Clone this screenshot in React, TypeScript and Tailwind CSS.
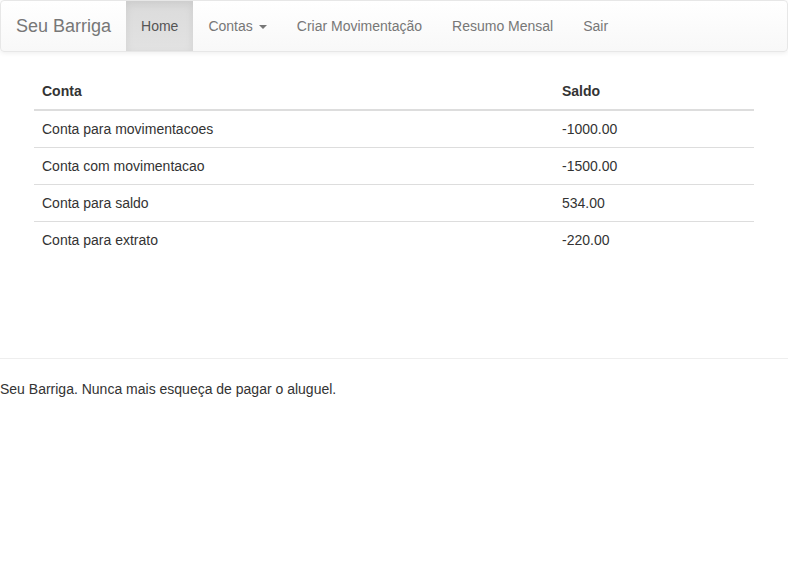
import { } from 'react';

const navItems = ['Criar Movimentação', 'Resumo Mensal', 'Sair'];

const contas = [
  { nome: 'Conta para movimentacoes', saldo: '-1000.00' },
  { nome: 'Conta com movimentacao', saldo: '-1500.00' },
  { nome: 'Conta para saldo', saldo: '534.00' },
  { nome: 'Conta para extrato', saldo: '-220.00' },
];

export default function App() {
  return (
    <div
      className="min-h-[561px] bg-white text-[14px] leading-[20px] text-[#333]"
      style={{ fontFamily: '"Liberation Sans", Arial, sans-serif' }}
    >
      {/* navbar */}
      <nav className="flex h-[52px] items-stretch rounded-[4px] border border-[#e7e7e7] bg-gradient-to-b from-white to-[#f8f8f8] shadow-[0_1px_5px_rgba(0,0,0,0.075)]">
        <a className="flex items-center px-[15px] text-[18px] text-[#777]">Seu Barriga</a>
        <ul className="flex items-stretch">
          <li className="flex items-center bg-gradient-to-b from-[#dbdbdb] to-[#e2e2e2] px-[15px] text-[#555] shadow-[inset_0_3px_9px_rgba(0,0,0,0.075)]">
            Home
          </li>
          <li className="flex items-center px-[15px] text-[#777]">
            Contas
            <span className="ml-[6px] mt-[2px] inline-block h-0 w-0 border-x-[4px] border-t-[4px] border-x-transparent border-t-[#777]" />
          </li>
          {navItems.map((item) => (
            <li key={item} className="flex items-center px-[15px] text-[#777]">
              {item}
            </li>
          ))}
        </ul>
      </nav>

      {/* conteudo */}
      <div className="mx-auto mt-[21px] w-[750px] px-[15px]">
        <table className="w-full border-collapse text-left">
          <thead>
            <tr className="border-b-2 border-[#ddd]">
              <th className="w-[520px] p-[8px] font-bold">Conta</th>
              <th className="p-[8px] font-bold">Saldo</th>
            </tr>
          </thead>
          <tbody>
            {contas.map((c, i) => (
              <tr key={c.nome} className={i > 0 ? 'border-t border-[#ddd]' : ''}>
                <td className="p-[8px]">{c.nome}</td>
                <td className="p-[8px]">{c.saldo}</td>
              </tr>
            ))}
          </tbody>
        </table>
      </div>

      {/* rodape */}
      <hr className="mt-[100px] mb-[20px] border-0 border-t border-[#eee]" />
      <p>Seu Barriga. Nunca mais esqueça de pagar o aluguel.</p>
    </div>
  );
}
